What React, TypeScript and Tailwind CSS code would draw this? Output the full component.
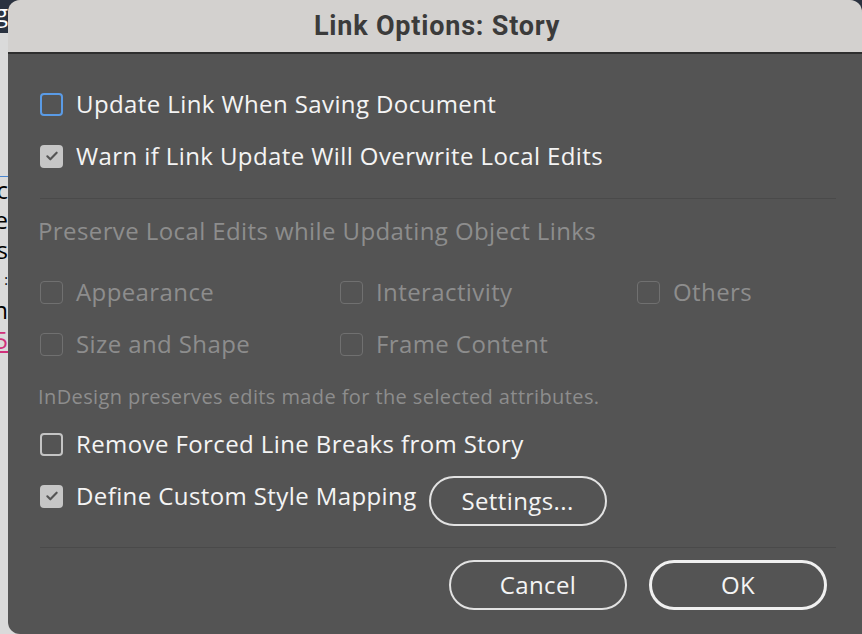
import React from "react";

type BoxKind = "focus" | "checked" | "unchecked" | "disabled";

const CheckMark = () => (
  <svg viewBox="0 0 24 24" className="h-[16px] w-[16px]" fill="none">
    <path d="M5 12.5l4.5 4.5L19 7" stroke="#555555" strokeWidth="3.2" strokeLinecap="round" strokeLinejoin="round" />
  </svg>
);

const Box = ({ kind }: { kind: BoxKind }) => {
  if (kind === "checked") {
    return (
      <div className="flex h-[23px] w-[23px] shrink-0 items-center justify-center rounded-[4px] bg-[#c6c6c6]">
        <CheckMark />
      </div>
    );
  }
  const border =
    kind === "focus"
      ? "border-2 border-[#5a9be6]"
      : kind === "unchecked"
      ? "border-2 border-[#c4c4c4]"
      : "border-[1.5px] border-[#707070]";
  return <div className={`h-[23px] w-[23px] shrink-0 rounded-[4px] ${border}`} />;
};

const Row = ({ kind, label, children }: { kind: BoxKind; label: string; children?: React.ReactNode }) => (
  <div className="flex h-[52px] items-center">
    <Box kind={kind} />
    <span
      className={`ml-[13px] whitespace-nowrap text-[24px] tracking-[0.4px] ${
        kind === "disabled" ? "text-[#8d8d8d]" : "text-[#f4f4f4]"
      }`}
    >
      {label}
    </span>
    {children}
  </div>
);

const PillButton = ({ label, strong }: { label: string; strong?: boolean }) => (
  <button
    className={`flex h-[50px] w-[178px] items-center justify-center rounded-full text-[24px] tracking-[0.4px] text-[#f4f4f4] ${
      strong ? "border-[3px] border-[#f0f0f0]" : "border-2 border-[#e2e2e2]"
    }`}
  >
    {label}
  </button>
);

// fragments of the document window peeking out behind the sheet
const behind = [
  { t: "ic", cls: "mt-[0px] text-black" },
  { t: "ne", cls: "mt-[4px] text-black" },
  { t: "s", cls: "mt-[4px] text-black" },
  { t: ":", cls: "mt-[4px] text-black text-[14px]" },
  { t: "n", cls: "mt-[4px] text-black" },
  { t: "5", cls: "mt-[4px] text-[#d0307a] underline" },
];

export default function App() {
  return (
    <div
      className="flex h-[634px] w-[862px] overflow-hidden bg-[linear-gradient(to_bottom,#2a3240_0,#2a3240_33px,#dadada_33px)]"
      style={{ fontFamily: '"Open Sans", "DejaVu Sans", sans-serif' }}
    >
      <div className="flex w-[8px] shrink-0 flex-col overflow-hidden text-[24px] leading-[26px]">
        <div className="flex h-[33px] justify-end text-white">g</div>
        <div className="mt-[143px] h-px bg-[#4a86d0]" />
        {behind.map((b, i) => (
          <div key={i} className={`flex justify-end ${b.cls}`}>
            <span className="whitespace-nowrap">{b.t}</span>
          </div>
        ))}
      </div>

      <div className="flex flex-1 flex-col overflow-hidden rounded-t-[12px] rounded-bl-[12px] bg-[#545454]">
        <div className="flex h-[54px] shrink-0 items-center justify-center border-b-2 border-[#2e2e2e] bg-[#d3d1cf] pl-[4px]">
          <span
            className="text-[27px] font-bold tracking-[0.8px] text-[#3b3b3b]"
            style={{ fontFamily: 'Roboto, "Liberation Sans", sans-serif' }}
          >
            Link Options: Story
          </span>
        </div>

        <div className="flex flex-col pl-[32px] pr-[26px] pt-[24px]">
          <Row kind="focus" label="Update Link When Saving Document" />
          <Row kind="checked" label="Warn if Link Update Will Overwrite Local Edits" />

          <div className="mt-[16px] h-px bg-[#4a4a4a]" />

          <div className="-ml-[2px] mt-[17px] flex h-[30px] items-center whitespace-nowrap text-[24px] tracking-[0.4px] text-[#8d8d8d]">
            Preserve Local Edits while Updating Object Links
          </div>

          <div className="mt-[20px] grid grid-cols-[300px_297px_1fr]">
            <Row kind="disabled" label="Appearance" />
            <Row kind="disabled" label="Interactivity" />
            <Row kind="disabled" label="Others" />
            <Row kind="disabled" label="Size and Shape" />
            <Row kind="disabled" label="Frame Content" />
          </div>

          <div className="-ml-[2px] mt-[15px] flex h-[24px] items-center whitespace-nowrap text-[20px] tracking-[0.4px] text-[#8d8d8d]">
            InDesign preserves edits made for the selected attributes.
          </div>

          <div className="mt-[9px]">
            <Row kind="unchecked" label="Remove Forced Line Breaks from Story" />
            <Row kind="checked" label="Define Custom Style Mapping">
              <div className="ml-[12px] mt-[10px]">
                <PillButton label="Settings..." />
              </div>
            </Row>
          </div>

          <div className="mt-[25px] h-px bg-[#4a4a4a]" />

          <div className="mt-[12px] flex justify-end gap-[22px] pr-[9px]">
            <PillButton label="Cancel" />
            <PillButton label="OK" strong />
          </div>
        </div>
      </div>
    </div>
  );
}
